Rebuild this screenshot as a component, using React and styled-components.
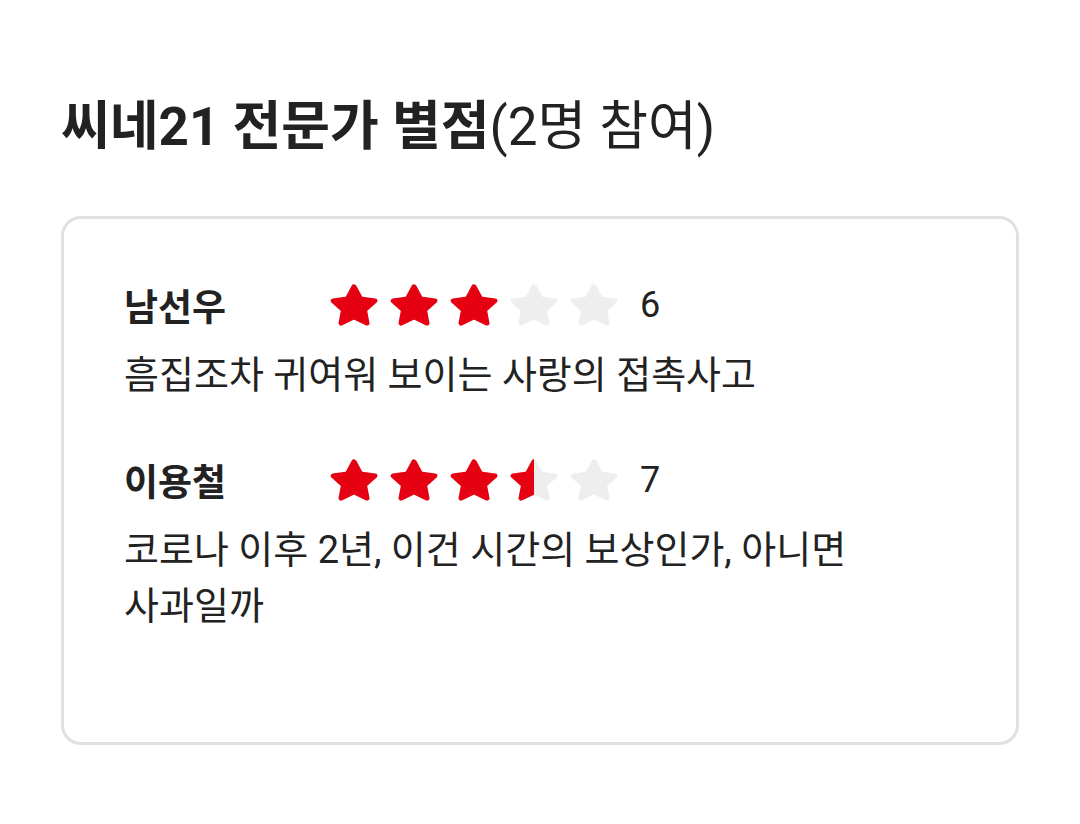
import React from "react";
import styled, { createGlobalStyle } from "styled-components";

const GlobalStyle = createGlobalStyle`
  body {
    margin: 0;
    background: #ffffff;
    font-family: Roboto, "Noto Sans CJK KR", sans-serif;
    color: #222222;
  }
`;

const reviews = [
  { name: "남선우", score: 6, text: "흠집조차 귀여워 보이는 사랑의 접촉사고" },
  { name: "이용철", score: 7, text: "코로나 이후 2년, 이건 시간의 보상인가, 아니면 사과일까" },
];

// five point star, drawn with rounded joins
const STAR =
  "M25 4 L31.2 16.6 L45 18.6 L35 28.3 L37.4 42 L25 35.5 L12.6 42 L15 28.3 L5 18.6 L18.8 16.6 Z";

const Star = ({ fill, id }) => (
  <svg width="52" height="44" viewBox="0 0 50 46" preserveAspectRatio="none">
    <defs>
      <clipPath id={id}>
        <rect x="0" y="0" width={50 * fill} height="46" />
      </clipPath>
    </defs>
    <path d={STAR} fill="#eeeeee" stroke="#eeeeee" strokeWidth="5" strokeLinejoin="round" />
    {fill > 0 && (
      <path
        d={STAR}
        fill="#e50012"
        stroke="#e50012"
        strokeWidth="5"
        strokeLinejoin="round"
        clipPath={`url(#${id})`}
      />
    )}
  </svg>
);

const Stars = ({ score, rowId }) => {
  const value = score / 2;
  return (
    <StarRow>
      {[0, 1, 2, 3, 4].map((i) => {
        const f = Math.max(0, Math.min(1, value - i));
        return <Star key={i} fill={f} id={`s-${rowId}-${i}`} />;
      })}
    </StarRow>
  );
};

export default function App() {
  return (
    <>
      <GlobalStyle />
      <Page>
        <Title>
          <strong>씨네21 전문가 별점</strong>(2명 참여)
        </Title>
        <Card>
          {reviews.map((r, idx) => (
            <Review key={r.name}>
              <Head>
                <Name>{r.name}</Name>
                <Stars score={r.score} rowId={idx} />
                <Score>{r.score}</Score>
              </Head>
              <Comment>{r.text}</Comment>
            </Review>
          ))}
        </Card>
      </Page>
    </>
  );
}

const Page = styled.div`
  padding: 91px 61px 0;
`;

const Title = styled.h2`
  margin: 0 0 53px;
  font-size: 53px;
  font-weight: 400;
  line-height: 72px;
  color: #222222;
  strong {
    font-weight: 700;
  }
`;

const Card = styled.div`
  box-sizing: border-box;
  width: 958px;
  height: 529px;
  border: 3px solid #e0e0e0;
  border-radius: 20px;
  padding: 61px 60px;
  display: flex;
  flex-direction: column;
  gap: 52px;
`;

const Review = styled.div`
  display: flex;
  flex-direction: column;
  gap: 17px;
`;

const Head = styled.div`
  display: flex;
  align-items: center;
  height: 50px;
`;

const Name = styled.div`
  width: 204px;
  font-size: 37px;
  font-weight: 700;
  color: #222222;
`;

const StarRow = styled.div`
  display: flex;
  gap: 8px;
`;

const Score = styled.div`
  margin-left: 20px;
  font-size: 36px;
  color: #222222;
`;

const Comment = styled.p`
  margin: 0;
  font-size: 38px;
  line-height: 56px;
  word-break: keep-all;
  color: #222222;
`;
